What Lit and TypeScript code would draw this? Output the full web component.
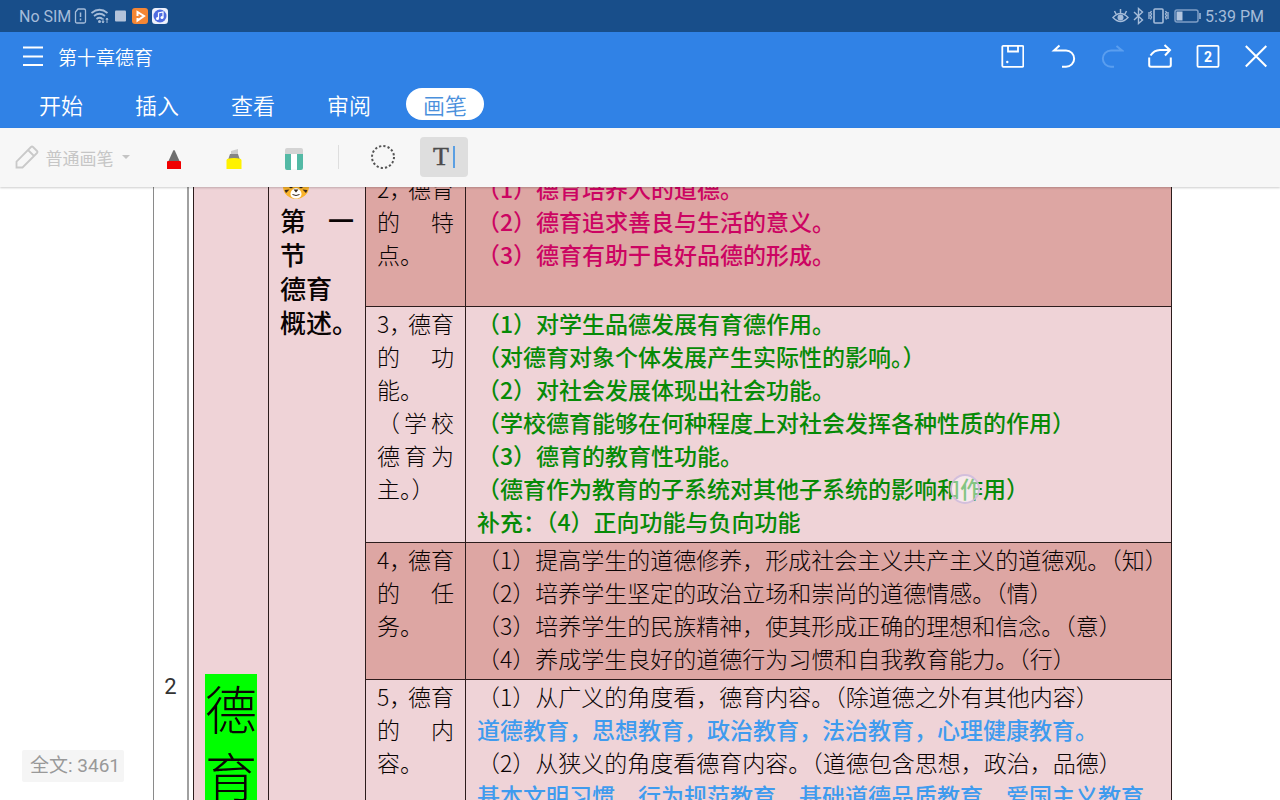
import { LitElement, html, svg, css } from "lit";
import { customElement } from "lit/decorators.js";

type Tone = "ink" | "pink" | "green" | "blue";
interface Line { text: string; tone: Tone }
interface Section { label: string[][]; shade: "dark" | "light"; lines: Line[] }

const SECTIONS: Section[] = [
  {
    label: [["2，", "德育"], ["的", "特"], ["点。"]],
    shade: "dark",
    lines: [
      { tone: "pink", text: "（1）德育培养人的道德。" },
      { tone: "pink", text: "（2）德育追求善良与生活的意义。" },
      { tone: "pink", text: "（3）德育有助于良好品德的形成。" },
    ],
  },
  {
    label: [["3，", "德育"], ["的", "功"], ["能。"], ["（", "学", "校"], ["德", "育", "为"], ["主。）"]],
    shade: "light",
    lines: [
      { tone: "green", text: "（1）对学生品德发展有育德作用。" },
      { tone: "green", text: "（对德育对象个体发展产生实际性的影响。）" },
      { tone: "green", text: "（2）对社会发展体现出社会功能。" },
      { tone: "green", text: "（学校德育能够在何种程度上对社会发挥各种性质的作用）" },
      { tone: "green", text: "（3）德育的教育性功能。" },
      { tone: "green", text: "（德育作为教育的子系统对其他子系统的影响和作用）" },
      { tone: "green", text: "补充：（4）正向功能与负向功能" },
    ],
  },
  {
    label: [["4，", "德育"], ["的", "任"], ["务。"]],
    shade: "dark",
    lines: [
      { tone: "ink", text: "（1）提高学生的道德修养，形成社会主义共产主义的道德观。（知）" },
      { tone: "ink", text: "（2）培养学生坚定的政治立场和崇尚的道德情感。（情）" },
      { tone: "ink", text: "（3）培养学生的民族精神，使其形成正确的理想和信念。（意）" },
      { tone: "ink", text: "（4）养成学生良好的道德行为习惯和自我教育能力。（行）" },
    ],
  },
  {
    label: [["5，", "德育"], ["的", "内"], ["容。"]],
    shade: "light",
    lines: [
      { tone: "ink", text: "（1）从广义的角度看，德育内容。（除道德之外有其他内容）" },
      { tone: "blue", text: "道德教育，思想教育，政治教育，法治教育，心理健康教育。" },
      { tone: "ink", text: "（2）从狭义的角度看德育内容。（道德包含思想，政治，品德）" },
      { tone: "blue", text: "基本文明习惯，行为规范教育，基础道德品质教育，爱国主义教育" },
    ],
  },
];

const ROW_CLASS = ["first", "middle", "middle", "last"];

const icon = (w: number, h: number, body: unknown) =>
  html`<svg width=${w} height=${h} viewBox="0 0 ${w} ${h}" fill="none" aria-hidden="true">${body}</svg>`;

const tiger = icon(28, 28, svg`
  <circle cx="5" cy="5" r="4" fill="#e8971c"/><circle cx="23" cy="5" r="4" fill="#e8971c"/>
  <ellipse cx="14" cy="14.500" rx="13" ry="12.500" fill="#f9b32b"/>
  <path d="M12 2h4l-2 7zM1.500 12l5 1.500-5 1.500zM26.500 12l-5 1.500 5 1.500zM2.500 18l5-.5-3.500 3.500zM25.500 18l-5-.5 3.500 3.500zM7 9h4v3H7zM17 9h4v3h-4z" fill="#3a2a1a"/>
  <path d="M14 16c2.500 0 5.500 3 5.500 6S17 26.500 14 26.500 8.500 25 8.500 22s3-6 5.500-6z" fill="#fff"/>
  <circle cx="9" cy="14.500" r="1.800" fill="#33251a"/><circle cx="19" cy="14.500" r="1.800" fill="#33251a"/>
  <path d="M11.500 17.500h5L14 20.500z" fill="#33251a"/><path d="M10.500 22.500q3.500 2 7 0" stroke="#33251a"/>`);

@customElement("app-root")
export class AppRoot extends LitElement {
  static styles = css`
    :host {
      display: flex;
      flex-direction: column;
      height: 100vh;
      overflow: hidden;
      position: relative;
      background: #fff;
      color: #0a0404;
      font-family: Roboto, "Noto Sans CJK SC", sans-serif;
    }
    svg { display: block; flex: none; }
    button {
      border: 0;
      padding: 0;
      background: none;
      font: inherit;
      color: inherit;
      display: flex;
      align-items: center;
      justify-content: center;
    }
    .status {
      flex: none;
      display: flex;
      align-items: center;
      height: 32px;
      padding: 0 16px 0 19px;
      background: #184e8a;
      color: #a5bcd9;
      font-size: 16px;
    }
    .status svg { margin: 0 2px; }
    .grow { flex: 1; }
    .head { flex: none; background: #3082e6; color: #fff; }
    .titlebar { display: flex; align-items: center; height: 48px; padding: 0 12px 0 21px; }
    .title {
      margin: 0 0 0 13px;
      font-size: 19px;
      font-weight: 350;
      font-family: "Noto Sans CJK SC", sans-serif;
    }
    .actions { display: flex; gap: 24px; }
    .tabs { display: flex; align-items: center; height: 48px; padding-left: 22px; gap: 18px; }
    .tab {
      width: 78px;
      height: 32px;
      border-radius: 16px;
      font-size: 22px;
      font-weight: 350;
      line-height: 32px;
      font-family: "Noto Sans CJK SC", sans-serif;
    }
    .tab.on { background: #fff; color: #4a90dc; }
    .tools {
      flex: none;
      display: flex;
      align-items: center;
      height: 58px;
      padding-bottom: 1px;
      background: #f7f7f7;
      box-shadow: 0 1px 2px #0003;
      z-index: 1;
    }
    .pen { width: 144px; gap: 7px; color: #c6c6c6; font-size: 17px; }
    .tool { width: 60px; height: 40px; padding-top: 4px; }
    .rule { width: 1px; height: 24px; margin: 0 20px 0 14px; background: #dedede; }
    .lasso { width: 48px; height: 40px; margin-right: 13px; }
    .type {
      width: 48px;
      height: 40px;
      border-radius: 4px;
      background: #dedede;
      color: #4c4c4c;
      font: 26px "Liberation Serif", serif;
      gap: 4px;
    }
    .type span { -webkit-text-stroke: 0.5px #4c4c4c; }
    .type i { width: 2px; height: 22px; background: #5b9fe2; }
    .pane {
      flex: 1;
      min-height: 0;
      overflow: hidden;
      padding: 0 108px 0 153px;
    }
    .sheet { display: flex; align-items: stretch; margin-top: -17px; }
    .gutter {
      flex: none;
      box-sizing: border-box;
      width: 36px;
      padding-top: 504px;
      border-left: 1px solid #8a8a8a;
      border-right: 2px solid #a0a0a0;
      font-size: 22px;
      line-height: 26px;
      text-align: center;
      color: #333;
    }
    .grid { flex: 1; min-width: 0; padding-left: 4px; }
    table {
      width: 100%;
      border-collapse: collapse;
      table-layout: fixed;
      font-family: "Noto Sans CJK SC", sans-serif;
      font-size: 23px;
      line-height: 33px;
      font-weight: 300;
    }
    td, th {
      padding: 0 11px;
      border: 1px solid #2c1c1c;
      vertical-align: top;
      text-align: left;
      font-weight: inherit;
    }
    td { padding-right: 0; }
    .c1 { width: 75px; }
    .c2 { width: 97px; }
    .c3 { width: 100px; }
    .light { background: #efd3d7; }
    .dark { background: #dda6a3; }
    .first td, .first th { padding-top: 1px; }
    .first .body { padding-bottom: 35px; }
    .middle .body { padding-bottom: 4px; }
    .last { height: 320px; }
    .first .part { padding-top: 503px; }
    .part mark {
      display: block;
      width: 52px;
      background: #00ff00;
      color: inherit;
      font-size: 52px;
      line-height: 67px;
      font-weight: 300;
    }
    .chapter { font-size: 26px; line-height: 34px; font-weight: 500; white-space: nowrap; }
    .chapter .face { height: 31px; padding-left: 2px; }
    .spread {
      display: flex;
      justify-content: space-between;
      white-space: nowrap;
    }
    .spread .num { font-feature-settings: "halt"; }
    .line { white-space: nowrap; }
    .pink, .green, .blue { font-weight: 500; }
    .pink { color: #cc0462; }
    .green { color: #078a07; }
    .blue { color: #3f9bee; }
    .count {
      position: absolute;
      left: 22px;
      bottom: 18px;
      padding: 0 4px 0 8px;
      border-radius: 2px;
      background: #f5f5f5;
      color: #999;
      font-size: 19px;
      line-height: 32px;
    }
    .touch {
      position: absolute;
      left: 950px;
      top: 474px;
      box-sizing: border-box;
      width: 30px;
      height: 30px;
      border-radius: 50%;
      border: 2px solid #c9b4d8cc;
      background: #ffffff80;
    }
  `;

  render() {
    return html`
      <div class="status">
        <span>No SIM</span>
        ${icon(14, 18, svg`<path d="M5 2h6q1.500 0 1.500 1.500v11q0 1.500-1.500 1.500H4q-1.500 0-1.500-1.500V5z" stroke="#a5bcd9" stroke-width="1.300"/><path d="M7.500 5.500v4.500M7.500 11.500v2" stroke="#a5bcd9" stroke-width="1.500"/>`)}
        ${icon(18, 18, svg`<g stroke="#a5bcd9" stroke-width="1.700"><path d="M.5 6q8-6.500 16 0M3 9q5.500-4.500 11 0M5.500 12q3-2.500 6 0"/></g><circle cx="8.500" cy="14.500" r="1.500" fill="#a5bcd9"/><path d="M12 11v5M11 14l1 2 1-2M16 16v-5M15 13l1-2 1 2" stroke="#a5bcd9"/>`)}
        ${icon(15, 18, svg`<rect x="2" y="3.500" width="11" height="11" rx="1" fill="#b4c3da"/>`)}
        ${icon(16, 16, svg`<rect width="16" height="16" rx="3" fill="#f58634"/><path d="M5.500 8V4l6.500 4-6.500 4.500V10" stroke="#fff" stroke-width="2"/>`)}
        ${icon(16, 16, svg`<rect width="16" height="16" rx="3.500" fill="#eef1fb"/><circle cx="8" cy="8" r="6.500" fill="#4f6be0"/><path d="M6.500 10.500V5l4.500-1v5.500" stroke="#fff" stroke-width="1.200"/><circle cx="5.500" cy="10.500" r="1.500" fill="#fff"/><circle cx="10" cy="9.500" r="1.500" fill="#fff"/>`)}
        <span class="grow"></span>
        ${icon(17, 18, svg`<path d="M1 10.500q7.500-8 15 0-7.500 8-15 0zM8.500 2v4M2.500 4l1.500 3M14.500 4L13 7" stroke="#a5bcd9" stroke-width="1.500"/><circle cx="8.500" cy="10.500" r="3" fill="#a5bcd9"/>`)}
        ${icon(11, 18, svg`<path d="M1 5l8.500 8-4 3.500v-15l4 3.500L1 13" stroke="#a5bcd9" stroke-width="1.400"/>`)}
        ${icon(21, 18, svg`<rect x="6" y="2" width="9" height="14" rx="1" stroke="#a5bcd9" stroke-width="1.600"/><path d="M3.500 4l-1 1.500 1 1.500-1 1.500 1 1.500-1 2.500M1 5v7M17.500 4l1 1.500-1 1.500 1 1.500-1 1.500 1 2.500M20 5v7" stroke="#a5bcd9" stroke-width="1.300"/>`)}
        ${icon(28, 18, svg`<rect x="2" y="3" width="23" height="12" rx="2" stroke="#7f9fc6" stroke-width="1.500"/><rect x="3.500" y="4.500" width="6" height="9" fill="#b4c6df"/><path d="M27 6v6" stroke="#a5bcd9" stroke-width="1.500"/>`)}
        <span>&hairsp;5:39 PM</span>
      </div>

      <header class="head">
        <div class="titlebar">
          <button aria-label="菜单">${icon(24, 24, svg`<path d="M2 3.500h20M2 12.500h20M2 21h20" stroke="#fff" stroke-width="2"/>`)}</button>
          <h1 class="title">第十章德育</h1>
          <span class="grow"></span>
          <div class="actions">
            <button aria-label="保存">${icon(24, 24, svg`<rect x="2.300" y="1.800" width="21" height="21" rx="1" stroke="#fff" stroke-width="1.800"/><path d="M8 2v5.500h10V2" stroke="#fff" stroke-width="1.800"/><circle cx="7.300" cy="18" r="1.200" fill="#fff"/>`)}</button>
            <button aria-label="撤销">${icon(28, 24, svg`<path d="M11.500 1.500L6 6.500h12a8 8 0 0 1 0 16.300h-4" stroke="#fff" stroke-width="2"/>`)}</button>
            <button aria-label="重做" disabled>${icon(24, 24, svg`<path d="M16.500 2L22 6.500h-11a8 8 0 0 0 0 16.300h3" stroke="#5a9eef" stroke-width="2"/>`)}</button>
            <button aria-label="分享">${icon(24, 24, svg`<path d="M1.200 13.500V21q0 1.800 1.800 1.800h18q1.800 0 1.800-1.800v-7.500M2.500 11.500Q6 6.200 12 6h10M16.500 1l5.500 5-5 5.500" stroke="#fff" stroke-width="2"/>`)}</button>
            <button aria-label="窗口">${icon(24, 24, svg`<rect x="1.500" y="1.800" width="21" height="21" rx="1" stroke="#fff" stroke-width="1.800"/><text x="12" y="17.500" text-anchor="middle" fill="#fff" font-family="Roboto, sans-serif" font-size="14" font-weight="700">2</text>`)}</button>
            <button aria-label="关闭">${icon(24, 24, svg`<path d="M1.800 2l20.500 20.500M22.300 2L1.800 22.500" stroke="#fff" stroke-width="2"/>`)}</button>
          </div>
        </div>
        <nav class="tabs">
          ${["开始", "插入", "查看", "审阅", "画笔"].map(
            (t) => html`<button class="tab ${t === "画笔" ? "on" : ""}">${t}</button>`,
          )}
        </nav>
      </header>

      <div class="tools">
        <button class="pen">
          ${icon(24, 24, svg`<path d="M1.500 22.500v-6L16 2q1-1 2 0l4 4q1 1 0 2L7.500 22.500zM13 5l6 6" stroke="#c9c9c9" stroke-width="1.800"/>`)}
          <span>普通画笔</span>
          ${icon(9, 6, svg`<path d="M1 1h8L5 5z" fill="#c4c4c4"/>`)}
        </button>
        <button class="tool" aria-label="红色画笔">${icon(16, 22, svg`<path d="M7 3q1-2 2 0l4.500 10h-11z" fill="#6e6e6e"/><path d="M1.500 13h13l.5 1v7H1v-7z" fill="#f00000"/>`)}</button>
        <button class="tool" aria-label="荧光笔">${icon(16, 22, svg`<path d="M5 3l7-2v5H5z" fill="#ccc"/><path d="M4 6h8l2 6H2z" fill="#858585"/><path d="M1 11q7-2 14 0l.5 1.500V21H.5v-8.500z" fill="#fff200"/>`)}</button>
        <button class="tool" aria-label="橡皮">${icon(20, 24, svg`<path d="M1 7V3q0-2 2-2h14q2 0 2 2v4z" fill="#d4d4d4"/><path d="M1 7h6v16H3q-2 0-2-2zM13 7h6v14q0 2-2 2h-4z" fill="#53b9a5"/><path d="M7 7h6v15H7z" fill="#fff"/>`)}</button>
        <span class="rule"></span>
        <button class="lasso" aria-label="套索">${icon(26, 26, svg`<circle cx="13" cy="13" r="11" stroke="#555" stroke-width="2" stroke-dasharray="2.200 2.120"/>`)}</button>
        <button class="type" aria-label="文字"><span>T</span><i></i></button>
      </div>

      <main class="pane">
        <div class="sheet">
          <div class="gutter">2</div>
          <div class="grid">
            <table>
              <colgroup><col class="c1"><col class="c2"><col class="c3"><col></colgroup>
              <tbody>
                ${SECTIONS.map((s, i) => html`
                  <tr class=${ROW_CLASS[i]}>
                    ${i === 0
                      ? html`
                          <th class="part light" rowspan="4"><mark>德育</mark></th>
                          <th class="chapter light" rowspan="4">
                            <div class="face">${tiger}</div>
                            <div class="spread"><span>第</span><span>一</span></div>
                            <div>节</div>
                            <div>德育</div>
                            <div>概述。</div>
                          </th>`
                      : ""}
                    <th class=${s.shade}>
                      ${s.label.map((row, r) => html`<div class="spread">${row.map(
                        (p, c) => html`<span class=${r === 0 && c === 0 ? "num" : ""}>${p}</span>`,
                      )}</div>`)}
                    </th>
                    <td class="body ${s.shade}">
                      ${s.lines.map((l) => html`<div class="line ${l.tone}">${l.text}</div>`)}
                    </td>
                  </tr>`)}
              </tbody>
            </table>
          </div>
        </div>
      </main>

      <output class="count">全文: 3461</output>
      <span class="touch"></span>
    `;
  }
}
